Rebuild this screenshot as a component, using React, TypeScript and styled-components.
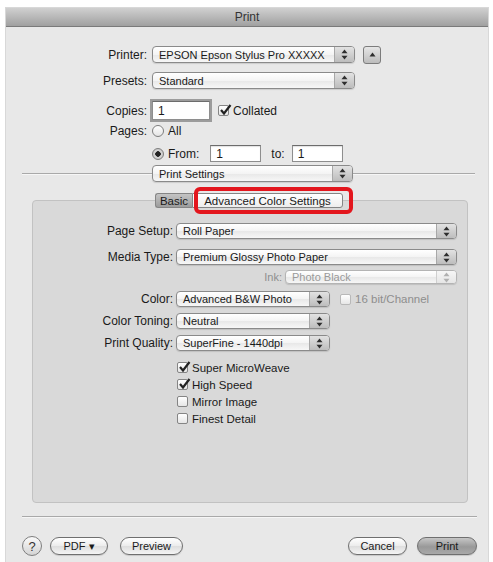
import styled, { createGlobalStyle } from 'styled-components';

const GlobalStyle = createGlobalStyle`
  html, body {
    margin: 0;
    padding: 0;
    background: #ffffff;
  }
  body {
    font-family: "Liberation Sans", Arial, sans-serif;
    font-size: 12px;
    color: #1a1a1a;
  }
`;

const Page = styled.div`
  padding: 8px 5px 0 6px;
`;

const Window = styled.div`
  width: 482px;
  height: 554px;
  background: #e8e8e8;
  display: flex;
  flex-direction: column;
  box-shadow: 0 0 0 1px #d8d8d8;
`;

const TitleBar = styled.div`
  height: 18px;
  border-bottom: 1px solid #7a7a7a;
  background: linear-gradient(#d0d0d0, #a0a0a0);
  display: flex;
  align-items: center;
  justify-content: center;
  color: #333;
`;

const FormRow = styled.div<{ $h: number; $top: number }>`
  display: flex;
  align-items: center;
  height: ${({ $h }) => $h}px;
  margin-top: ${({ $top }) => $top}px;
`;

const Label = styled.span`
  width: 141px;
  flex-shrink: 0;
  text-align: right;
  padding-right: 5px;
  white-space: nowrap;
`;

const PopupBox = styled.div<{ $w: number; $h?: number; $disabled?: boolean }>`
  width: ${({ $w }) => $w}px;
  height: ${({ $h }) => $h ?? 17}px;
  box-sizing: border-box;
  flex-shrink: 0;
  border: 1px solid ${({ $disabled }) => ($disabled ? '#b4b4b4' : '#8a8a8a')};
  border-radius: 4px;
  background: linear-gradient(#ffffff, #f4f4f4 50%, #e8e8e8 52%, #f7f7f7);
  box-shadow: 0 1px 1px rgba(0, 0, 0, 0.12);
  display: flex;
  align-items: center;
  color: ${({ $disabled }) => ($disabled ? '#9a9a9a' : '#1a1a1a')};
`;

const PopupText = styled.span`
  flex: 1;
  padding-left: 6px;
  font-size: 11px;
  white-space: nowrap;
  overflow: hidden;
`;

const Stepper = styled.span<{ $disabled?: boolean }>`
  width: 19px;
  align-self: stretch;
  border-left: 1px solid ${({ $disabled }) => ($disabled ? '#cfcfcf' : '#a8a8a8')};
  border-radius: 0 3px 3px 0;
  background: ${({ $disabled }) =>
    $disabled ? 'linear-gradient(#f6f6f6, #e6e6e6)' : 'linear-gradient(#e2e2e2, #bdbdbd)'};
  display: flex;
  align-items: center;
  justify-content: center;
`;

const DisclosureButton = styled.div`
  width: 18px;
  height: 18px;
  box-sizing: border-box;
  margin-left: 8px;
  border: 1px solid #7c7c7c;
  border-radius: 3px;
  background: linear-gradient(#e6e6e6, #bcbcbc);
  display: flex;
  align-items: center;
  justify-content: center;
`;

const TextField = styled.div<{ $w: number; $focused?: boolean }>`
  width: ${({ $w }) => $w}px;
  height: ${({ $focused }) => ($focused ? 19 : 17)}px;
  box-sizing: border-box;
  background: #fff;
  border: 1px solid #8e8e8e;
  border-top-color: #6c6c6c;
  box-shadow: ${({ $focused }) => ($focused ? '0 0 0 2px #9c9c9c' : 'inset 0 1px 1px rgba(0,0,0,0.12)')};
  padding-left: 5px;
  display: flex;
  align-items: center;
`;

const Gap = styled.span<{ $w: number }>`
  width: ${({ $w }) => $w}px;
  flex-shrink: 0;
`;

const CheckItem = styled.span<{ $disabled?: boolean; $small?: boolean }>`
  display: inline-flex;
  align-items: center;
  gap: 4px;
  font-size: ${({ $small }) => ($small ? '11.5px' : '12px')};
  color: ${({ $disabled }) => ($disabled ? '#8e8e8e' : '#1a1a1a')};
  white-space: nowrap;
`;

const Box = styled.span<{ $disabled?: boolean }>`
  width: 11px;
  height: 11px;
  box-sizing: border-box;
  border: 1px solid ${({ $disabled }) => ($disabled ? '#b8b8b8' : '#858585')};
  border-radius: 2px;
  background: linear-gradient(#ffffff, #e6e6e6);
  position: relative;
  flex-shrink: 0;
`;

const Tick = styled.svg`
  position: absolute;
  left: 0;
  top: -3px;
`;

const Radio = styled.span<{ $on?: boolean }>`
  width: 12px;
  height: 12px;
  box-sizing: border-box;
  border: 1px solid #7e7e7e;
  border-radius: 50%;
  background: ${({ $on }) =>
    $on ? 'radial-gradient(circle, #222 0 2.5px, #d8d8d8 3px, #b8b8b8)' : 'linear-gradient(#ffffff, #e4e4e4)'};
  flex-shrink: 0;
`;

const Separator = styled.div<{ $left: number; $right: number; $top: number }>`
  display: flex;
  align-items: center;
  height: 17px;
  margin: ${({ $top, $left, $right }) => `${$top}px ${$right}px 0 ${$left}px`};
`;

const Line = styled.div<{ $w?: number }>`
  height: 1px;
  background: #a9a9a9;
  border-bottom: 1px solid #f6f6f6;
  ${({ $w }) => ($w ? `width: ${$w}px; flex-shrink: 0;` : 'flex: 1;')}
`;

const Panel = styled.div`
  margin: 18px 20px 0 26px;
  height: 303px;
  box-sizing: border-box;
  border: 1px solid #c2c2c2;
  border-radius: 4px;
  background: #d9d9d9;
  display: flex;
  flex-direction: column;
`;

const TabStrip = styled.div`
  display: flex;
  height: 15px;
  margin: -8px 0 0 122px;
`;

const Tab = styled.div<{ $w: number; $selected?: boolean; $side: 'left' | 'right' }>`
  width: ${({ $w }) => $w}px;
  height: 15px;
  box-sizing: border-box;
  border: 1px solid #858585;
  ${({ $side }) => ($side === 'left' ? 'border-right: none; border-radius: 3px 0 0 3px;' : 'border-radius: 0 3px 3px 0;')}
  background: ${({ $selected }) =>
    $selected ? 'linear-gradient(#ffffff, #ededed)' : 'linear-gradient(#c4c4c4, #9c9c9c)'};
  display: flex;
  align-items: center;
  justify-content: center;
  font-size: 11.5px;
  position: relative;
  white-space: nowrap;
`;

const Highlight = styled.span`
  position: absolute;
  left: 1px;
  top: -7px;
  width: 159px;
  height: 27px;
  box-sizing: border-box;
  border: 4px solid #e3161d;
  border-radius: 6px;
`;

const PanelRow = styled.div<{ $h?: number; $top: number; $end?: boolean }>`
  display: flex;
  align-items: center;
  height: ${({ $h }) => $h ?? 16}px;
  margin-top: ${({ $top }) => $top}px;
  ${({ $end }) => ($end ? 'justify-content: flex-end; padding-right: 10px; gap: 3px;' : '')}
`;

const PanelLabel = styled.span`
  width: 140px;
  flex-shrink: 0;
  text-align: right;
  padding-right: 3px;
  white-space: nowrap;
`;

const DimLabel = styled.span`
  color: #8e8e8e;
  font-size: 11px;
`;

const Options = styled.div`
  display: flex;
  flex-direction: column;
  margin: 8px 0 0 144px;
`;

const OptionRow = styled.div`
  height: 17px;
  display: flex;
  align-items: center;
`;

const ButtonBar = styled.div`
  display: flex;
  align-items: center;
  height: 20px;
  margin: 11px 11px 0 16px;
`;

const HelpButton = styled.div`
  width: 20px;
  height: 20px;
  box-sizing: border-box;
  border: 1px solid #7e7e7e;
  border-radius: 50%;
  background: linear-gradient(#fafafa, #d4d4d4);
  display: flex;
  align-items: center;
  justify-content: center;
  font-size: 13px;
  color: #333;
  margin-right: 8px;
`;

const PushButton = styled.div<{ $w: number; $gap?: number; $primary?: boolean }>`
  width: ${({ $w }) => $w}px;
  height: 18px;
  box-sizing: border-box;
  margin-right: ${({ $gap }) => $gap ?? 0}px;
  border: 1px solid #6f6f6f;
  border-radius: 9px;
  background: ${({ $primary }) =>
    $primary ? 'linear-gradient(#c6c6c6, #999999 55%, #a9a9a9)' : 'linear-gradient(#ffffff, #ececec 50%, #dedede 52%, #f4f4f4)'};
  box-shadow: 0 1px 1px rgba(0, 0, 0, 0.15);
  display: flex;
  align-items: center;
  justify-content: center;
  font-size: 11px;
  white-space: nowrap;
`;

const Spacer = styled.div`
  flex: 1;
`;

function Arrows({ disabled }: { disabled?: boolean }) {
  const c = disabled ? '#b0b0b0' : '#2e2e2e';
  return (
    <svg width="7" height="11" viewBox="0 0 7 11">
      <path d="M3.5 0.5 L6.5 4.3 L0.5 4.3 Z" fill={c} />
      <path d="M0.5 6.7 L6.5 6.7 L3.5 10.5 Z" fill={c} />
    </svg>
  );
}

function Popup({ value, w, h, disabled }: { value: string; w: number; h?: number; disabled?: boolean }) {
  return (
    <PopupBox $w={w} $h={h} $disabled={disabled}>
      <PopupText>{value}</PopupText>
      <Stepper $disabled={disabled}>
        <Arrows disabled={disabled} />
      </Stepper>
    </PopupBox>
  );
}

function Check({
  label,
  checked,
  disabled,
  small,
}: {
  label: string;
  checked?: boolean;
  disabled?: boolean;
  small?: boolean;
}) {
  return (
    <CheckItem $disabled={disabled} $small={small}>
      <Box $disabled={disabled}>
        {checked && (
          <Tick width="13" height="13" viewBox="0 0 13 13">
            <path d="M2 7 L5 10.5 L11.5 2" fill="none" stroke="#222" strokeWidth="2.2" />
          </Tick>
        )}
      </Box>
      {label}
    </CheckItem>
  );
}

export default function App() {
  return (
    <>
      <GlobalStyle />
      <Page>
        <Window>
          <TitleBar>Print</TitleBar>

          <FormRow $h={17} $top={19}>
            <Label>Printer:</Label>
            <Popup value="EPSON Epson Stylus Pro XXXXX" w={203} />
            <DisclosureButton>
              <svg width="7" height="5" viewBox="0 0 7 5">
                <path d="M3.5 0.5 L6.5 4.5 L0.5 4.5 Z" fill="#2e2e2e" />
              </svg>
            </DisclosureButton>
          </FormRow>
          <FormRow $h={17} $top={9}>
            <Label>Presets:</Label>
            <Popup value="Standard" w={203} />
          </FormRow>
          <FormRow $h={19} $top={12}>
            <Label>Copies:</Label>
            <TextField $w={58} $focused>1</TextField>
            <Gap $w={8} />
            <Check label="Collated" checked />
          </FormRow>
          <FormRow $h={16} $top={3}>
            <Label>Pages:</Label>
            <CheckItem>
              <Radio />
              All
            </CheckItem>
          </FormRow>
          <FormRow $h={17} $top={6}>
            <Label />
            <CheckItem>
              <Radio $on />
              From:
            </CheckItem>
            <Gap $w={11} />
            <TextField $w={51}>1</TextField>
            <Gap $w={10} />
            to:
            <Gap $w={7} />
            <TextField $w={51}>1</TextField>
          </FormRow>

          <Separator $top={3} $left={16} $right={13}>
            <Line $w={130} />
            <Popup value="Print Settings" w={201} />
            <Line />
          </Separator>

          <Panel>
            <TabStrip>
              <Tab $w={37} $side="left">Basic</Tab>
              <Tab $w={151} $side="right" $selected>
                Advanced Color Settings
                <Highlight />
              </Tab>
            </TabStrip>

            <PanelRow $top={15}>
              <PanelLabel>Page Setup:</PanelLabel>
              <Popup value="Roll Paper" w={281} h={16} />
            </PanelRow>
            <PanelRow $top={10}>
              <PanelLabel>Media Type:</PanelLabel>
              <Popup value="Premium Glossy Photo Paper" w={281} h={16} />
            </PanelRow>
            <PanelRow $top={5} $h={14} $end>
              <DimLabel>Ink:</DimLabel>
              <Popup value="Photo Black" w={172} h={14} disabled />
            </PanelRow>
            <PanelRow $top={7}>
              <PanelLabel>Color:</PanelLabel>
              <Popup value="Advanced B&W Photo" w={154} h={16} />
              <Gap $w={10} />
              <Check label="16 bit/Channel" disabled small />
            </PanelRow>
            <PanelRow $top={6}>
              <PanelLabel>Color Toning:</PanelLabel>
              <Popup value="Neutral" w={154} h={16} />
            </PanelRow>
            <PanelRow $top={6}>
              <PanelLabel>Print Quality:</PanelLabel>
              <Popup value="SuperFine - 1440dpi" w={154} h={16} />
            </PanelRow>

            <Options>
              <OptionRow>
                <Check label="Super MicroWeave" checked small />
              </OptionRow>
              <OptionRow>
                <Check label="High Speed" checked small />
              </OptionRow>
              <OptionRow>
                <Check label="Mirror Image" small />
              </OptionRow>
              <OptionRow>
                <Check label="Finest Detail" small />
              </OptionRow>
            </Options>
          </Panel>

          <Separator $top={5} $left={16} $right={11}>
            <Line />
          </Separator>

          <ButtonBar>
            <HelpButton>?</HelpButton>
            <PushButton $w={58} $gap={12}>PDF ▾</PushButton>
            <PushButton $w={63}>Preview</PushButton>
            <Spacer />
            <PushButton $w={59} $gap={10}>Cancel</PushButton>
            <PushButton $w={60} $primary>Print</PushButton>
          </ButtonBar>
        </Window>
      </Page>
    </>
  );
}
